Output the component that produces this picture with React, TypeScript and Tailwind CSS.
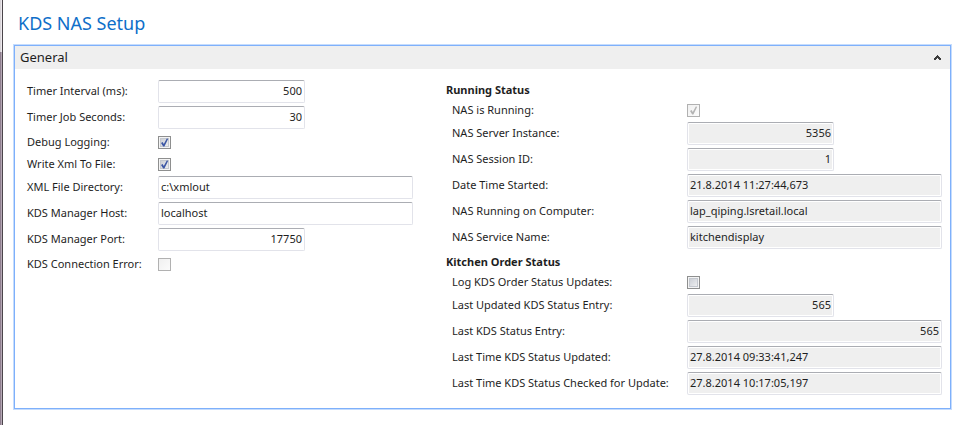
import { useId } from "react";
import type { ReactNode } from "react";

function CheckBox({ id, checked = false, disabled = false }: { id: string; checked?: boolean; disabled?: boolean }) {
  return (
    <span className="relative block size-[13px] shrink-0">
      <input
        id={id}
        type="checkbox"
        defaultChecked={checked}
        disabled={disabled}
        className={
          disabled
            ? "block size-[13px] appearance-none border border-[#b1b1b1] bg-linear-to-br from-[#f0f0f0] to-[#fbfbfb]"
            : "block size-[13px] appearance-none border border-[#8e8f8f] bg-linear-to-br from-[#c3c7cf] to-[#f6f6f6] shadow-[inset_0_0_0_1px_#f4f4f4,inset_0_0_0_2px_#c4c8cf]"
        }
      />
      {checked && (
        <svg viewBox="0 0 13 13" className="pointer-events-none absolute inset-0 size-[13px]" aria-hidden="true">
          <path
            d="M3 7 L4.6 6 L5.8 7.9 L8.8 2.4 L10.2 2.8 L6.4 10.6 L5.2 10.6 Z"
            fill={disabled ? "#b4b4b4" : "#3c57a5"}
          />
        </svg>
      )}
    </span>
  );
}

type Column = "left" | "right";

function Row({ id, label, column, tall, children }: { id: string; label: string; column: Column; tall: boolean; children: ReactNode }) {
  return (
    <div className={tall ? "flex h-[26px] items-center pb-[3px]" : "flex h-[22px] items-center pb-px"}>
      <label
        htmlFor={id}
        className={column === "left" ? "w-[131px] shrink-0 pb-px whitespace-nowrap" : "w-[241px] shrink-0 pb-px pl-1.5 whitespace-nowrap"}
      >
        {label}
      </label>
      {children}
    </div>
  );
}

function Field({ label, value, column, short = false, numeric = false }: { label: string; value: string; column: Column; short?: boolean; numeric?: boolean }) {
  const id = useId();
  const locked = column === "right";
  return (
    <Row id={id} label={label} column={column} tall>
      <input
        id={id}
        type="text"
        defaultValue={value}
        readOnly={locked}
        className={[
          "h-[23px] rounded-[2px] border border-[#e2e3ea] border-t-[#abadb3] px-0.5 pb-0.5 outline-none",
          locked ? "bg-[#efefef] shadow-[inset_0_0_0_1px_#ffffff]" : "bg-white",
          short ? "w-[147px]" : "w-0 min-w-0 grow",
          numeric ? "text-right" : "text-left",
        ].join(" ")}
      />
    </Row>
  );
}

function CheckField({ label, column, checked, disabled }: { label: string; column: Column; checked?: boolean; disabled?: boolean }) {
  const id = useId();
  return (
    <Row id={id} label={label} column={column} tall={false}>
      <CheckBox id={id} checked={checked} disabled={disabled} />
    </Row>
  );
}

export default function App() {
  return (
    <div className="flex min-h-screen bg-white font-['Noto_Sans','Open_Sans',sans-serif] text-[11px] leading-4 text-[#1e1e1e]">
      <div className="flex w-[3px] shrink-0" aria-hidden="true">
        <div className="w-px bg-linear-to-b from-[#d8d3d8] from-[52px] to-[#8f7f8f] to-[52px]" />
        <div className="w-px bg-linear-to-b from-[#eeeaee] from-[52px] to-[#b5a8b5] to-[52px]" />
        <div className="w-px bg-[#4b454b]" />
      </div>
      <main className="min-w-0 grow pr-2 pl-[11px]">
        <h1 className="flex h-[45px] items-center pl-1 text-[18px] leading-6 text-[#0f6fc9]">KDS NAS Setup</h1>
        <section className="border border-[#7eb0fb] shadow-[0_0_0_1px_#c5dcfd]">
          <h2>
            <button
              type="button"
              aria-expanded="true"
              className="flex h-[23px] w-full items-center justify-between bg-[#efefef] pr-[9px] pb-px pl-[5px] text-[13px]"
            >
              General
              <svg viewBox="0 0 7 5" width="7" height="5" fill="#3c3c3c" shapeRendering="crispEdges" aria-hidden="true">
                <path d="M3 0h1v1h1v1h1v1h1v2h-2v-1h-1v-1h-1v1h-1v1h-2v-2h1v-1h1v-1h1z" />
              </svg>
            </button>
          </h2>
          <div className="grid grid-cols-[386fr_496fr] gap-x-[33px] pt-[11px] pr-2 pb-2.5 pl-3">
            <div>
              <Field column="left" label="Timer Interval (ms):" value="500" short numeric />
              <Field column="left" label="Timer Job Seconds:" value="30" short numeric />
              <CheckField column="left" label="Debug Logging:" checked />
              <CheckField column="left" label="Write Xml To File:" checked />
              <Field column="left" label="XML File Directory:" value="c:\xmlout" />
              <Field column="left" label="KDS Manager Host:" value="localhost" />
              <Field column="left" label="KDS Manager Port:" value="17750" short numeric />
              <CheckField column="left" label="KDS Connection Error:" disabled />
            </div>
            <div>
              <h3 className="flex h-5 items-center font-bold">Running Status</h3>
              <CheckField column="right" label="NAS is Running:" checked disabled />
              <Field column="right" label="NAS Server Instance:" value="5356" short numeric />
              <Field column="right" label="NAS Session ID:" value="1" short numeric />
              <Field column="right" label="Date Time Started:" value="21.8.2014 11:27:44,673" />
              <Field column="right" label="NAS Running on Computer:" value="lap_qiping.lsretail.local" />
              <Field column="right" label="NAS Service Name:" value="kitchendisplay" />
              <h3 className="flex h-5 items-center font-bold">Kitchen Order Status</h3>
              <CheckField column="right" label="Log KDS Order Status Updates:" />
              <Field column="right" label="Last Updated KDS Status Entry:" value="565" short numeric />
              <Field column="right" label="Last KDS Status Entry:" value="565" numeric />
              <Field column="right" label="Last Time KDS Status Updated:" value="27.8.2014 09:33:41,247" />
              <Field column="right" label="Last Time KDS Status Checked for Update:" value="27.8.2014 10:17:05,197" />
            </div>
          </div>
        </section>
      </main>
    </div>
  );
}
